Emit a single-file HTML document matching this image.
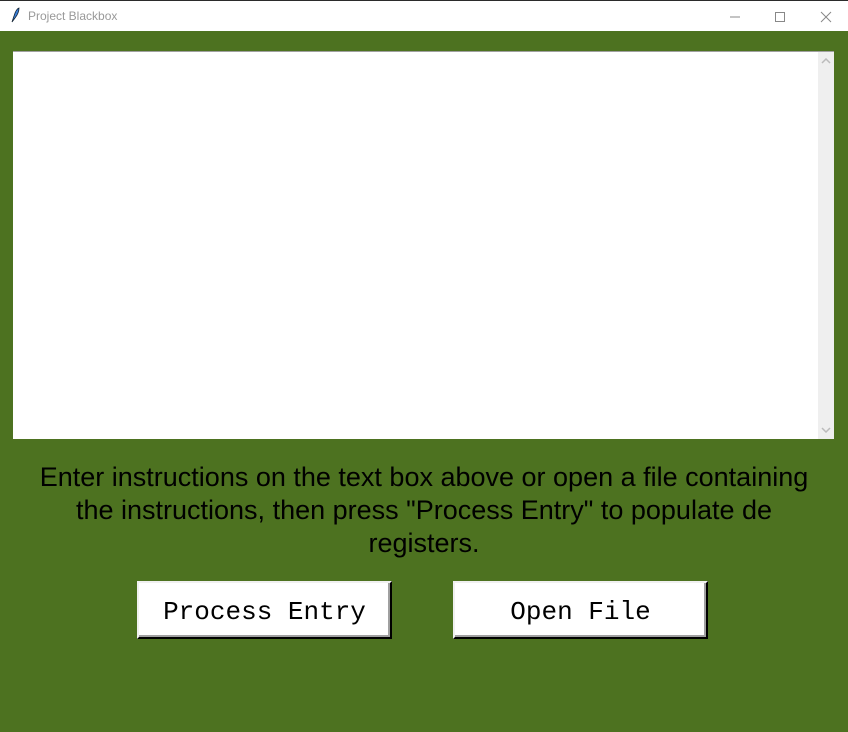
<!DOCTYPE html>
<html><head><style>
body{margin:0;width:848px;height:732px;overflow:hidden;background:#4d7220;font-family:"Liberation Sans",sans-serif;position:relative}
#tb{position:absolute;left:0;top:0;width:848px;height:31px;background:#fff;border-top:1px solid #2b2b2b;box-sizing:border-box}
#tb .t{position:absolute;left:28px;top:8px;font-size:12px;color:#999}
#txt{position:absolute;left:13px;top:51px;width:821px;height:388px;background:#fff;border-top:1px solid #a0a0a0;box-sizing:border-box}
#sb{position:absolute;right:0;top:0;width:16px;height:100%;background:#efefef}
#msg{position:absolute;left:0;top:461px;width:848px;text-align:center;font-size:27px;line-height:33px;color:#000}
.btn{position:absolute;top:581px;width:255px;height:58px;box-sizing:border-box;background:#fff;border:2px solid;border-color:#f0f0f0 #000 #000 #f0f0f0;box-shadow:inset -2px -2px 0 #a0a0a0;font-family:"Liberation Mono",monospace;font-size:26px;text-align:center;line-height:58px;color:#000}
</style></head><body>
<div id="tb">
<svg style="position:absolute;left:10px;top:6px" width="10" height="16" viewBox="0 0 10 16"><path d="M2 15 L4 9 Q6 2 9 1 Q9 6 5 11 Z" fill="#3a7fd8" stroke="#123" stroke-width="0.8"/></svg>
<span class="t">Project Blackbox</span>
<svg style="position:absolute;left:728px;top:9px" width="110" height="14" viewBox="0 0 110 14">
<line x1="2" y1="7" x2="12" y2="7" stroke="#888"/>
<rect x="47.5" y="2.5" width="9" height="9" fill="none" stroke="#888"/>
<path d="M93 2 L103 12 M103 2 L93 12" stroke="#888"/>
</svg>
</div>
<div id="txt"><div id="sb">
<svg style="position:absolute;left:3px;top:6px" width="10" height="6"><path d="M1 5 L5 1 L9 5" stroke="#bbb" stroke-width="1.5" fill="none"/></svg>
<svg style="position:absolute;left:3px;bottom:6px" width="10" height="6"><path d="M1 1 L5 5 L9 1" stroke="#bbb" stroke-width="1.5" fill="none"/></svg>
</div></div>
<div id="msg">Enter instructions on the text box above or open a file containing<br>the instructions, then press "Process Entry" to populate de<br>registers.</div>
<div class="btn" style="left:137px">Process Entry</div>
<div class="btn" style="left:453px">Open File</div>
</body></html>
